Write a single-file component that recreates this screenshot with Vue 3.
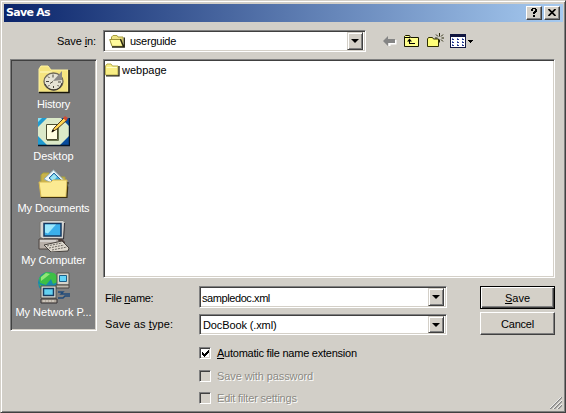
<script setup>
import { ref } from 'vue'

const places = [
  { id: 'history', label: 'History', cls: 'w-history' },
  { id: 'desktop', label: 'Desktop', cls: 'w-desktop' },
  { id: 'documents', label: 'My Documents', cls: 'w-docs' },
  { id: 'computer', label: 'My Computer', cls: 'w-comp' },
  { id: 'network', label: 'My Network P...', cls: 'w-net' },
]
const automatic = ref(true)
</script>

<template>
  <div class="window">
    <header class="titlebar">
      <span class="title">Save As</span>
      <button class="cap" aria-label="Help">
        <svg width="8" height="9" viewBox="0 0 8 9" shape-rendering="crispEdges"><path d="M2 0h4v1h1v3h-1v1h-1v1h-2v-2h1v-1h1v-2h-2v2h-2v-2h1zM3 7h2v2h-2z" /></svg>
      </button>
      <button class="cap last" aria-label="Close">
        <svg width="8" height="7" viewBox="0 0 8 7"><path d="M.5 0L7.5 7M7.5 0L.5 7" stroke="#000" stroke-width="1.7" /></svg>
      </button>
    </header>

    <div class="toolbar">
      <label class="look"><span class="t w-savein">Save <u>i</u>n:</span></label>
      <div class="combo lookup">
        <svg class="folder" width="17" height="14" viewBox="0 0 17 14">
          <path d="M2.500 11V3L4 1.500h4l1 1.500h5v9" fill="#eee383" stroke="#a69d3e" />
          <path d="M.7 5.500h10.500L14 12.300H3z" fill="#fffa9c" stroke="#9d943a" />
          <path d="M3 13h12.300V3.600M11.500 5l3 7.500" fill="none" stroke="#252314" stroke-width="1.300" />
        </svg>
        <span class="t w-user">userguide</span>
        <span class="drop"><i /></span>
      </div>
      <div class="tools">
        <svg class="back" width="14" height="11" viewBox="0 0 14 11"><path d="M6.500 10V7.500h6V4" fill="none" stroke="#fff" stroke-width="2" /><path d="M0 5L5 0v3h7v4H5v3z" fill="#858585" /></svg>
        <svg class="up" width="16" height="14" viewBox="0 0 16 14"><path d="M.5 12.500v-10l1-1h4l1 2h8v9z" fill="#ffff8c" stroke="#171700" /><path d="M1 3.500h5M5.500 9.500V6M5 9.500h6" fill="none" stroke="#000" /><path d="M3 7.500l2.500-3L8 7.500z" /></svg>
        <svg class="new" width="18" height="15" viewBox="0 0 18 15"><path d="M.5 13.500V6l1-1.500h4l1 1.500h5v7.500z" fill="#ffff78" stroke="#302f00" /><path d="M12.500 0v3.500M12.500 6.500v3M9 1.500l2 2M14 3.500l2-2M14.500 5H17M14 6.500l2 2M8 5h2.500" fill="none" stroke="#28280b" /></svg>
        <svg class="view" width="25" height="14" viewBox="0 0 25 14" shape-rendering="crispEdges"><path d="M0 0h16v14H0z" fill="#101640" /><path d="M1 3h14v10H1z" fill="#fff" /><path d="M2 5h2M7 5h2M12 5h2M2 8h2M7 8h2M12 8h2M2 11h2M7 11h2M12 11h2" stroke="#28348a" stroke-width="1" /><path d="M2 4h1M7 4h1M12 4h1M2 7h1M7 7h1M12 7h1M2 10h1M7 10h1M12 10h1" stroke="#5b83c8" /><path d="M18 6h5v1h-1v1h-1v1h-1V8h-1V7h-1z" /></svg>
      </div>
    </div>

    <main class="browse">
      <nav class="places">
        <div v-for="p in places" :key="p.id" class="place">
          <svg v-if="p.id === 'history'" width="32" height="32" viewBox="0 0 32 32">
            <path d="M1 28V5l2-3h7l3 4h17v22z" fill="#f5e47f" stroke="#fff3a0" />
            <path d="M1 28.500h30V6" fill="none" stroke="#181508" stroke-width="1.500" />
            <path d="M2 8h12" stroke="#fffbc5" />
            <ellipse cx="15.500" cy="17.500" rx="9.500" ry="8.500" fill="#e5e2d4" stroke="#6f6858" stroke-width="1.300" />
            <path d="M15 17L24 7v9z" fill="#8b8987" /><path d="M7 20q3 6 9 6t8-7" fill="none" stroke="#37332b" />
            <path d="M15 10.500v3M8 17.500h3M20 18h3M10 12.500l1.500 1.500M10 22.500l1.500-1.500M15.500 24v-2M21 22.500l-1.500-1.500M15 17.500l-3 2" stroke="#47443b" fill="none" />
          </svg>
          <svg v-else-if="p.id === 'desktop'" width="32" height="32" viewBox="0 0 32 32">
            <path d="M0 2h31v27H0z" fill="#bed9bd" /><path d="M8 2h16l7 8v12l-7 7H8l-8-7V10z" fill="#dbe9c8" />
            <path d="M0 2h9L0 11zM0 20v9h9z" fill="#219bd0" /><path d="M31 20v9h-9zM23 2h8v8z" fill="#074b9c" /><path d="M0 2h4L0 6z" fill="#89e0f3" />
            <path d="M0 29.500h31.500V2" fill="none" stroke="#071628" stroke-width="1.400" />
            <path d="M8.500 8.500h11v15h-11z" fill="#ffffe1" stroke="#4a4c30" /><path d="M9 24.500h11.500V12" fill="none" stroke="#69764f" /><path d="M14 16l2-4L26 2l3 2-10 9z" fill="#ffd451" stroke="#503b1b" /><path d="M25 2l2-2 3 2-2 3z" fill="#d14a35" /><path d="M13.500 16.500l1-3 2 1z" />
          </svg>
          <svg v-else-if="p.id === 'documents'" width="32" height="32" viewBox="0 0 32 32">
            <path d="M3 17V7l2-2h6l3 4h13v19H4z" fill="#c9b24b" stroke="#a8a13e" />
            <path d="M6 11L15.500 2 31 17l-4 6z" fill="#edf8fb" stroke="#8faab3" /><path d="M11 10l5-5 7 7-4 5z" fill="#3aabdc" stroke="#2a659b" /><path d="M12 10l4-4 3 3-4 4z" fill="#9fe5f2" />
            <path d="M1 14h12l2-2h14l-1 17H3z" fill="#fbea92" stroke="#d5b84e" /><path d="M3 29.500h26L30 14" fill="none" stroke="#3d3211" stroke-width="1.200" />
          </svg>
          <svg v-else-if="p.id === 'computer'" width="32" height="32" viewBox="0 0 32 32">
            <path d="M2 2l3-1.500h20l2 2-1 16.500H5L2 17z" fill="#d5d4d0" stroke="#77756f" /><path d="M26.500 3l-1 16H6" fill="none" stroke="#33313a" /><path d="M6 3.500h17v12.500H6z" fill="#3bafea" stroke="#153860" stroke-width="1.500" /><path d="M7 4.500h11l-8 9-3-1z" fill="#9ce7fb" />
            <path d="M5 19h19l3 3v3H2v-4z" fill="#4b3b38" /><path d="M1 19h19l3 6v4H1z" fill="#b7afa8" stroke="#4c4440" /><path d="M2 21h16" stroke="#eee" /><path d="M6 25l18-4 7 7-1 3-17 1z" fill="#ded8ce" stroke="#46413d" /><path d="M9 26l15-3M11 28l15-3M14 30l15-3" stroke="#6c6963" stroke-dasharray="2 1" />
          </svg>
          <svg v-else width="32" height="32" viewBox="0 0 32 32">
            <circle cx="10.500" cy="10.500" r="10.500" fill="#168aac" /><path d="M1 6l7-6 8 1 4 4v5l-5 2-2-5-5 6-6-2zM1 12l5 2 2 5-5-3z" fill="#3dbf45" /><path d="M3 5l5-4 4 1-5 4-4 3z" fill="#91e579" />
            <path d="M19 1h12v12H19z" fill="#d8d5cb" stroke="#54504b" /><path d="M21.500 3.500h7v6h-7z" fill="#65d5f9" stroke="#1c5f88" /><path d="M18 13h13v3H18z" fill="#beb8ad" stroke="#4a4643" />
            <path d="M3 14h15v12H3z" fill="#deded7" stroke="#53514a" /><path d="M5.500 16.500h10v7h-10z" fill="#63d0f1" stroke="#173c62" stroke-width="1.500" /><path d="M3 27h16v4H3z" fill="#b3aa9e" stroke="#353132" /><path d="M5 29h11" stroke="#e4ded5" stroke-dasharray="2 1" /><path d="M20 20h5l-2 2h9M20 26h5l2-2h5" fill="none" stroke="#204a79" stroke-width="1.400" />
          </svg>
          <span class="t" :class="p.cls">{{ p.label }}</span>
        </div>
      </nav>
      <section class="files">
        <div class="file">
          <svg width="15" height="14" viewBox="0 0 15 14"><path d="M.5 12V3L2 1h4l1.500 2H13v9z" fill="#f9ee84" stroke="#b5ac51" /><path d="M1.500 4.500H12" stroke="#ffffc6" /><path d="M1 12.800h13V3" fill="none" stroke="#262310" stroke-width="1.300" /></svg>
          <span class="t w-web">webpage</span>
        </div>
      </section>
    </main>

    <footer class="form">
      <div class="fields">
        <div class="field"><label class="name"><span class="t w-fn">File <u>n</u>ame:</span></label><div class="combo"><span class="t w-sample">sampledoc.xml</span><span class="drop"><i /></span></div></div>
        <div class="field second"><label><span class="t w-type">Save as <u>t</u>ype:</span></label><div class="combo"><span class="t w-doc">DocBook (.xml)</span><span class="drop"><i /></span></div></div>
        <div class="checks">
          <label class="check" @click="automatic = !automatic"><span class="box"><svg v-if="automatic" width="7" height="7" viewBox="0 0 7 7" shape-rendering="crispEdges"><path d="M0 2h1v1h1v1h1V3h1V2h1V1h1V0h1v3H6v1H5v1H4v1H3v1H2V6H1V5H0z" /></svg></span><span class="t w-auto"><u>A</u>utomatic file name extension</span></label>
          <label class="check disabled"><span class="box" /><span class="t w-pass">Save with password</span></label>
          <label class="check disabled third"><span class="box" /><span class="t w-edit">Edit filter settings</span></label>
        </div>
      </div>
      <div class="actions">
        <button class="btn default"><span class="t w-save"><u>S</u>ave</span></button>
        <button class="btn"><span class="t w-cancel">Cancel</span></button>
      </div>
    </footer>
    <svg class="grip" width="12" height="12" viewBox="0 0 12 12"><path d="M0 12L12 0M4 12l8-8M8 12l4-4" stroke="#858585" stroke-width="1.500" /><path d="M-1 12L11 0M3 12l9-9M7 12l5-5" stroke="#fff" stroke-width=".8" /></svg>
  </div>
</template>

<style>
body { margin: 0; overflow: hidden; }
</style>
<style scoped>
* { box-sizing: border-box; }
.window { position: relative; width: 566px; height: 413px; padding: 3px 2px 2px 3px; background: #d2cfc8; border: 1px solid; border-color: #d4d0c8 #404040 #404040 #d4d0c8; box-shadow: inset 1px 1px #fff, inset -1px -1px #808080; font: 11px/14px "Liberation Sans", Arial, sans-serif; color: #000; }
button { padding: 0; margin: 0; font: inherit; color: inherit; }
svg { display: block; flex: none; }
.t { white-space: nowrap; }
u { text-underline-offset: 1px; text-decoration-thickness: 1px; }
.titlebar { height: 18px; display: flex; align-items: center; padding: 0 3px 0 2px; background: linear-gradient(90deg, #0a246a, #a6caf0); color: #fff; }
.title { flex: 1; font: bold 11px/16px "DejaVu Sans", sans-serif; letter-spacing: -.7px; }
.cap { display: flex; align-items: center; justify-content: center; width: 16px; height: 14px; background: #d4d0c8; border: 1px solid; border-color: #fff #404040 #404040 #fff; box-shadow: inset -1px -1px #808080; padding: 0 1px 1px 0; }
.last { margin-left: 2px; }
.toolbar { height: 37px; padding-top: 8px; display: flex; }
.look { width: 99px; padding: 4px 7px 0 0; text-align: right; }
.combo { display: flex; align-items: center; height: 22px; background: #fff; border: 1px solid; border-color: #808080 #fff #fff #808080; box-shadow: inset 1px 1px #404040, inset -1px -1px #d4d0c8; padding: 0 2px 0 3px; }
.lookup { width: 263px; padding-left: 5px; }
.folder { margin-right: 4px; }
.drop { margin-left: auto; width: 16px; height: 18px; background: #d4d0c8; border: 1px solid; border-color: #d4d0c8 #404040 #404040 #d4d0c8; box-shadow: inset 1px 1px #fff, inset -1px -1px #808080; display: flex; align-items: center; justify-content: center; }
.drop i { border: 4px solid transparent; border-top-color: #000; border-bottom: 0; }
.tools { display: flex; align-items: flex-start; padding: 4px 0 0 17px; }
.back { margin-top: 2px; }
.up { margin-left: 7px; }
.new { margin: -1px 0 0 7px; }
.view { margin-left: 5px; }
.browse { display: flex; gap: 6px; padding-left: 6px; height: 273px; }
.places { width: 87px; height: 272px; background: #808080; border: 1px solid; border-color: #808080 #fff #fff #808080; box-shadow: inset 1px 1px #404040, inset -1px -1px #d4d0c8; padding-top: 4px; color: #fff; }
.place { height: 52px; display: flex; flex-direction: column; align-items: center; }
.place .t { margin-top: 1px; }
.files { width: 452px; height: 219px; background: #fff; border: 1px solid; border-color: #808080 #fff #fff #808080; box-shadow: inset 1px 1px #404040, inset -1px -1px #d4d0c8; padding: 3px 1px; }
.file { display: flex; align-items: center; gap: 2px; }
.form { display: flex; margin-top: -46px; padding-left: 101px; }
.fields { width: 342px; }
.field { display: flex; align-items: center; }
.field label { width: 94px; }
.field .name { padding-top: 2px; }
.field .w-sample { padding-top: 2px; margin-left: -1px; }
.field .combo { width: 248px; }
.second { margin-top: 6px; }
.second label { padding-bottom: 1px; }
.second .combo { height: 21px; }
.second .drop { height: 17px; }
.checks { padding: 11px 0 0 94px; }
.check { height: 14px; display: flex; align-items: center; margin-bottom: 9px; gap: 6px; }
.check.third { margin-top: -1px; }
.box { width: 12px; height: 12px; background: #fff; border: 1px solid; border-color: #808080 #fff #fff #808080; box-shadow: inset 1px 1px #404040, inset -1px -1px #d4d0c8; display: flex; align-items: center; justify-content: center; }
.disabled { color: #8c8a84; text-shadow: 1px 1px #fff; }
.disabled .box { background: #d4d0c8; }
.actions { margin-left: 33px; display: flex; flex-direction: column; gap: 3px; }
.btn { width: 75px; height: 23px; background: #d4d0c8; border: 1px solid; border-color: #fff #404040 #404040 #fff; box-shadow: inset -1px -1px #808080; display: flex; align-items: center; justify-content: center; }
.default { border-color: #000; box-shadow: inset 1px 1px #fff, inset -1px -1px #404040, inset -2px -2px #808080; }
.w-savein { letter-spacing: -.1px; }
.w-user { letter-spacing: -.25px; }
.w-sample { letter-spacing: -.42px; }
.w-doc { letter-spacing: -.12px; }
.w-fn { letter-spacing: -.3px; }
.w-type { letter-spacing: .12px; }
.w-auto { letter-spacing: -.24px; }
.w-pass { letter-spacing: -.1px; }
.w-edit { letter-spacing: -.2px; }
.w-cancel { letter-spacing: -.2px; }
.w-docs, .w-comp { letter-spacing: -.12px; }
.w-history { letter-spacing: -.15px; }
.grip { position: absolute; right: 3px; bottom: 3px; }
</style>
